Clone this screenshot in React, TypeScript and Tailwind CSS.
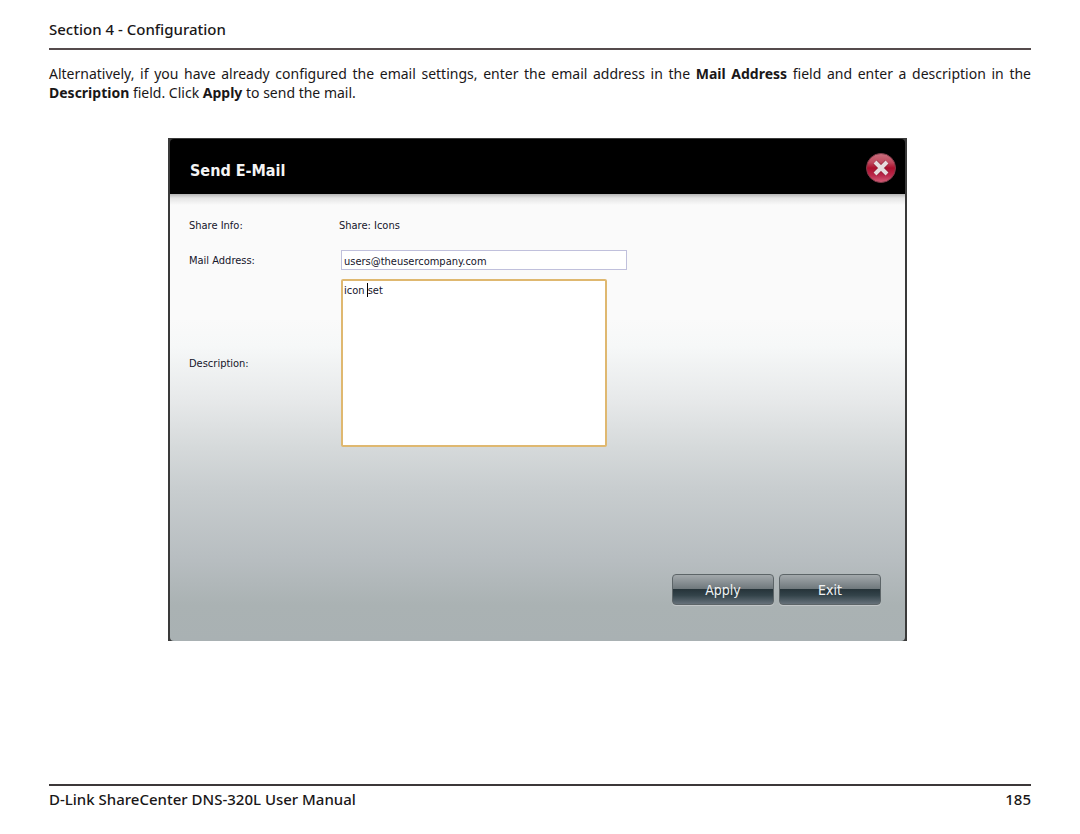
import React, { useState } from 'react';

interface DialogButtonProps {
  label: string;
  type?: 'button' | 'submit';
}

function DialogButton({ label, type = 'button' }: DialogButtonProps) {
  return (
    <button
      type={type}
      className="h-[31px] w-[102px] rounded-[4px] border border-[#5d6568] bg-[linear-gradient(to_bottom,#a3a9ac_0%,#6f787c_48%,#26343a_50%,#33434a_70%,#66717a_100%)] text-[14px] leading-5 text-[#f0f2f3] shadow-[0_1px_0_#c2c6c8] outline-none"
    >
      {label}
    </button>
  );
}

function CloseIcon() {
  return (
    <svg viewBox="0 0 32 32" className="h-8 w-8" aria-hidden="true">
      <defs>
        <linearGradient id="close-fill" x1="0" y1="0" x2="0" y2="1">
          <stop offset="0" stopColor="#c9707e" />
          <stop offset="0.3" stopColor="#c04a5e" />
          <stop offset="0.5" stopColor="#ab0f2c" />
          <stop offset="0.75" stopColor="#b9284a" />
          <stop offset="1" stopColor="#d4607a" />
        </linearGradient>
      </defs>
      <circle cx="16" cy="16" r="14.5" fill="url(#close-fill)" stroke="#7d3a48" strokeWidth="1" />
      <path d="M10 10 L22 22 M22 10 L10 22" stroke="#7a1b2e" strokeWidth="5.5" opacity="0.5" />
      <path d="M10 10 L22 22 M22 10 L10 22" stroke="#e6dcdd" strokeWidth="4" />
    </svg>
  );
}

function SendMailDialog() {
  const [address, setAddress] = useState('users@theusercompany.com');
  const [description, setDescription] = useState('icon set');

  return (
    <section className="border-x-2 border-t border-[#3a3a3a] bg-[#3a3a3a] font-['DejaVu_Sans_Condensed','DejaVu_Sans',sans-serif] text-[11px] leading-[22px] text-[#15152a]">
      <header className="flex h-[55px] items-center justify-between rounded-t-[4px] bg-black pt-[2px] pr-2 pl-5">
        <h2 className="pt-[6px] text-[16px] leading-6 font-bold text-[#f4f4f4]">Send E-Mail</h2>
        <button type="button" aria-label="Close" className="rounded-full">
          <CloseIcon />
        </button>
      </header>

      <form
        onSubmit={(e) => e.preventDefault()}
        className="rounded-b-[4px] bg-[linear-gradient(to_bottom,#b4b4b4_0px,#e4e4e4_4px,#fafafa_11px,#fafafa_28%,#f6f8f8_34%,#e7e9ea_46%,#d5d9da_57%,#c8cdcf_66%,#b7bdc0_82%,#aab2b3_92%,#a9b1b3_100%)] pt-[21px] pr-6 pb-9 pl-[19px]"
      >
        <div className="grid grid-cols-[150px_1fr] items-center">
          <span>Share Info:</span>
          <span>Share: Icons</span>

          <label htmlFor="mail-address" className="mt-[13px]">Mail Address:</label>
          <input
            id="mail-address"
            type="text"
            value={address}
            onChange={(e) => setAddress(e.target.value)}
            className="mt-[13px] ml-[2px] h-5 w-[286px] self-start border border-[#c0c0dc] bg-white px-[2px] pt-[2px] leading-4 outline-none"
          />

          <label htmlFor="description" className="mt-[9px]">Description:</label>
          <div className="relative mt-[7px] ml-[2px] w-[266px]">
            <textarea
              id="description"
              value={description}
              onChange={(e) => setDescription(e.target.value)}
              className="block h-[168px] w-full resize-none rounded-[2px] border-2 border-[#dfb870] bg-white px-px leading-5 outline-none"
            />
            <span className="absolute top-1 left-[26px] h-[14px] w-px bg-black" />
          </div>
        </div>

        <div className="mt-[127px] flex justify-end gap-[5px]">
          <DialogButton label="Apply" type="submit" />
          <DialogButton label="Exit" />
        </div>
      </form>
    </section>
  );
}

export default function App() {
  return (
    <div className="flex min-h-screen flex-col bg-white px-[49px] pt-5 pb-[25px] font-['Noto_Sans',sans-serif] text-[14px] leading-[19px] text-[#1a1718]">
      <header className="border-b-2 border-[#554b4c] pb-[9px] text-[15px] leading-[19px] font-medium">
        Section 4 - Configuration
      </header>

      <main className="flex-1">
        <p className="mt-[14px] text-justify">
          Alternatively, if you have already configured the email settings, enter the email address in the{' '}
          <strong>Mail Address</strong> field and enter a description in the <strong>Description</strong> field. Click{' '}
          <strong>Apply</strong> to send the mail.
        </p>
        <div className="pt-9 pr-[124px] pl-[119px]">
          <SendMailDialog />
        </div>
      </main>

      <footer className="flex justify-between border-t-2 border-[#3c3839] pt-1 text-[15px] leading-[19px] font-medium">
        <span>D-Link ShareCenter DNS-320L User Manual</span>
        <span>185</span>
      </footer>
    </div>
  );
}
